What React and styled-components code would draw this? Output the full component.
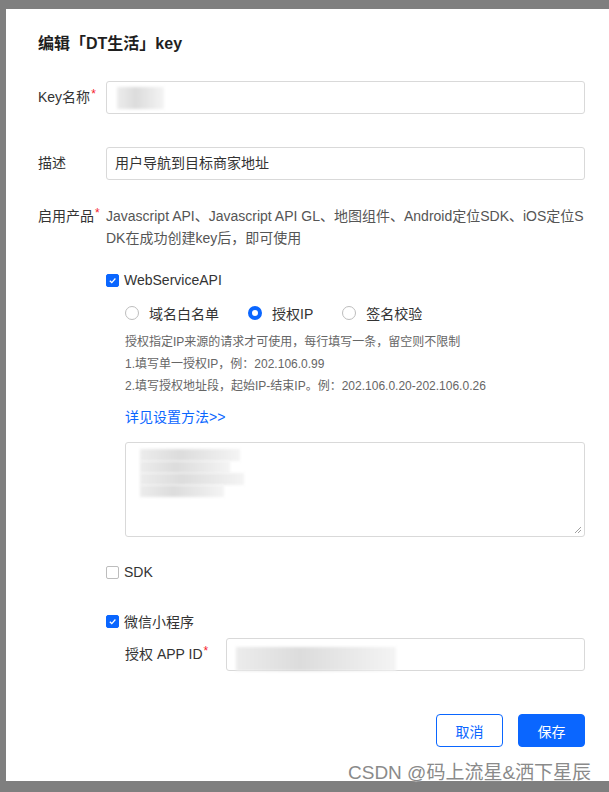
import React from 'react';
import styled, { createGlobalStyle } from 'styled-components';

const GlobalStyle = createGlobalStyle`
  html, body {
    margin: 0;
    padding: 0;
    background: #7f7f7f;
    overflow: hidden;
    height: 792px;
  }
  body {
    font-family: "Liberation Sans", "Noto Sans CJK SC", sans-serif;
    color: #333;
  }
`;

const colors = {
  blue: '#0a66ff',
  label: '#333333',
  text: '#555555',
  hint: '#666666',
  border: '#d9d9d9',
  red: '#f5222d',
};

const Modal = styled.div`
  position: relative;
  box-sizing: border-box;
  margin: 9px 0 0 6px;
  width: 603px;
  height: 772px;
  background: #fff;
  padding: 24px 0 0 32px;
`;

const Content = styled.div`
  width: 547px;
  display: flex;
  flex-direction: column;
`;

const Title = styled.h2`
  margin: 0;
  font-size: 16px;
  line-height: 22px;
  font-weight: bold;
  color: #1f1f1f;
`;

const Row = styled.div`
  display: flex;
  align-items: flex-start;
  margin-top: ${(p) => p.mt || 0}px;
  margin-left: ${(p) => p.indent || 0}px;
`;

const Label = styled.div`
  flex: none;
  width: ${(p) => p.w || 68}px;
  font-size: 14px;
  line-height: ${(p) => p.lh || 33}px;
  color: ${colors.label};
  white-space: nowrap;
`;

const Star = styled.sup`
  color: ${colors.red};
  font-size: 12px;
  margin-left: 1px;
  vertical-align: 4px;
  line-height: 0;
`;

const Input = styled.div`
  box-sizing: border-box;
  flex: 1;
  height: 33px;
  border: 1px solid ${colors.border};
  border-radius: 3px;
  padding: 0 8px;
  font-size: 14px;
  line-height: 31px;
  color: ${colors.label};
  display: flex;
  align-items: center;
`;

const Mosaic = styled.span`
  display: block;
  width: ${(p) => p.w}px;
  height: ${(p) => p.h}px;
  margin-left: ${(p) => p.ml || 0}px;
  margin-top: ${(p) => p.mt || 0}px;
  background: linear-gradient(90deg, #ececec, #dcdcdc 40%, #e8e8e8 70%, #f4f4f4);
  filter: blur(1.5px);
`;

const Column = styled.div`
  flex: 1;
  display: flex;
  flex-direction: column;
`;

const Desc = styled.div`
  font-size: 14px;
  line-height: 22px;
  color: ${colors.text};
  word-break: break-all;
`;

const CheckRow = styled.label`
  display: flex;
  align-items: center;
  gap: 5px;
  height: 22px;
  font-size: 14px;
  color: ${colors.label};
  margin-top: ${(p) => p.mt || 0}px;
`;

const Box = styled.span`
  box-sizing: border-box;
  width: 13px;
  height: 13px;
  border-radius: 2px;
  border: 1px solid ${(p) => (p.on ? colors.blue : '#bdbdbd')};
  background: ${(p) => (p.on ? colors.blue : '#fff')};
  display: flex;
  align-items: center;
  justify-content: center;
`;

const Checkbox = ({ on, children, mt }) => (
  <CheckRow mt={mt}>
    <Box on={on}>
      {on && (
        <svg width="9" height="9" viewBox="0 0 10 10">
          <path d="M2 5.2 L4.2 7.3 L8.2 2.8" fill="none" stroke="#fff" strokeWidth="1.4" />
        </svg>
      )}
    </Box>
    {children}
  </CheckRow>
);

const Sub = styled.div`
  margin-left: 19px;
  display: flex;
  flex-direction: column;
`;

const Radios = styled.div`
  display: flex;
  margin-top: 11px;
  height: 22px;
  align-items: center;
`;

const RadioItem = styled.span`
  display: flex;
  align-items: center;
  gap: 10px;
  font-size: 14px;
  color: ${colors.label};
  margin-right: 29px;
`;

const Circle = styled.span`
  box-sizing: border-box;
  width: 14px;
  height: 14px;
  border-radius: 50%;
  border: ${(p) => (p.on ? `4px solid ${colors.blue}` : '1px solid #bdbdbd')};
  background: #fff;
`;

const Hint = styled.div`
  margin-top: 7px;
  font-size: 12px;
  line-height: 22px;
  color: ${colors.hint};
`;

const Link = styled.a`
  margin-top: 9px;
  font-size: 14px;
  line-height: 22px;
  color: ${colors.blue};
  text-decoration: none;
`;

const TextArea = styled.div`
  position: relative;
  box-sizing: border-box;
  margin-top: 14px;
  height: 95px;
  border: 1px solid ${colors.border};
  border-radius: 3px;
  padding: 6px 14px;
`;

const Grip = styled.svg`
  position: absolute;
  right: 2px;
  bottom: 2px;
`;

const Footer = styled.div`
  display: flex;
  justify-content: flex-end;
  gap: 15px;
  margin-top: 43px;
`;

const Button = styled.button`
  box-sizing: border-box;
  width: 67px;
  height: 33px;
  border-radius: 4px;
  border: 1px solid ${colors.blue};
  background: ${(p) => (p.primary ? colors.blue : '#fff')};
  color: ${(p) => (p.primary ? '#fff' : colors.blue)};
  font-family: inherit;
  font-size: 14px;
  padding: 0;
`;

const Watermark = styled.div`
  position: absolute;
  left: 342px;
  top: 752px;
  font-size: 19px;
  line-height: 24px;
  color: #8a8a8a;
  white-space: nowrap;
  text-shadow: 0 0 1px #fff, 0 0 1px #fff;
`;

export default function App() {
  return (
    <>
      <GlobalStyle />
      <Modal>
        <Content>
          <Title>编辑「DT生活」key</Title>

          <Row mt={26}>
            <Label>
              Key名称<Star>*</Star>
            </Label>
            <Input>
              <Mosaic w={47} h={22} ml={2} />
            </Input>
          </Row>

          <Row mt={33}>
            <Label>描述</Label>
            <Input>用户导航到目标商家地址</Input>
          </Row>

          <Row mt={25}>
            <Label lh={22}>
              启用产品<Star>*</Star>
            </Label>
            <Column>
              <Desc>
                Javascript API、Javascript API GL、地图组件、Android定位SDK、iOS定位SDK在成功创建key后，即可使用
              </Desc>

              <Checkbox on mt={20}>WebServiceAPI</Checkbox>
              <Sub>
                <Radios>
                  <RadioItem>
                    <Circle />
                    域名白名单
                  </RadioItem>
                  <RadioItem>
                    <Circle on />
                    授权IP
                  </RadioItem>
                  <RadioItem>
                    <Circle />
                    签名校验
                  </RadioItem>
                </Radios>
                <Hint>
                  授权指定IP来源的请求才可使用，每行填写一条，留空则不限制
                  <br />
                  1.填写单一授权IP，例：202.106.0.99
                  <br />
                  2.填写授权地址段，起始IP-结束IP。例：202.106.0.20-202.106.0.26
                </Hint>
                <Link href="#">详见设置方法&gt;&gt;</Link>
                <TextArea>
                  <Mosaic w={100} h={12} />
                  <Mosaic w={90} h={12} />
                  <Mosaic w={104} h={12} />
                  <Mosaic w={84} h={12} />
                  <Grip width="8" height="8" viewBox="0 0 8 8">
                    <path d="M7 1 L1 7 M7 4 L4 7" stroke="#888" strokeWidth="0.8" />
                  </Grip>
                </TextArea>
              </Sub>

              <Checkbox mt={24}>SDK</Checkbox>
              <Checkbox on mt={27}>微信小程序</Checkbox>
              <Row mt={6} indent={19}>
                <Label w={101}>
                  授权 APP ID<Star>*</Star>
                </Label>
                <Input>
                  <Mosaic w={160} h={24} ml={1} mt={8} />
                </Input>
              </Row>
            </Column>
          </Row>

          <Footer>
            <Button>取消</Button>
            <Button primary>保存</Button>
          </Footer>
        </Content>
        <Watermark>CSDN @码上流星&amp;洒下星辰</Watermark>
      </Modal>
    </>
  );
}
